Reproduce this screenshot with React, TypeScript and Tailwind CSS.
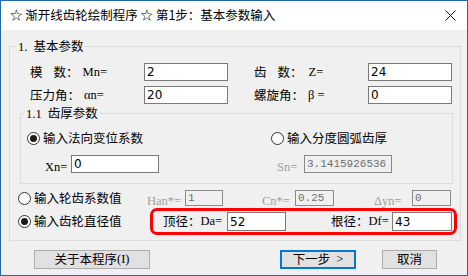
import React from 'react';

const cjk = { fontFamily: '"Noto Sans CJK SC", "Noto Sans", sans-serif' };
const mono = { fontFamily: '"Liberation Mono", "DejaVu Sans Mono", monospace' };
const serif = { fontFamily: '"Liberation Serif", "DejaVu Serif", serif' };

function Radio({ checked, label }: { checked?: boolean; label: string }) {
  return (
    <div className="flex items-center h-[16px]">
      <span className="w-[13px] h-[13px] rounded-full border border-[#333333] bg-white flex items-center justify-center">
        {checked && <span className="w-[7px] h-[7px] rounded-full bg-[#1a1a1a]" />}
      </span>
      <span className="ml-[3px] text-[12.5px] text-black leading-none" style={cjk}>
        {label}
      </span>
    </div>
  );
}

function Field({ value, width, disabled, h = 18 }: { value: string; width: number; disabled?: boolean; h?: number }) {
  return (
    <div
      className={
        disabled
          ? 'border border-[#8a8a8a] bg-[#f0f0f0] text-[#6d6d6d] flex items-center pl-[2px] text-[11px] overflow-hidden whitespace-nowrap'
          : 'border border-[#7a7a7a] bg-white text-black flex items-center pl-[2px] text-[12px]'
      }
      style={{ width, height: h, ...(disabled ? mono : { fontFamily: 'Tahoma, "DejaVu Sans", sans-serif' }) }}
    >
      {value}
    </div>
  );
}

function Code({ t, gray }: { t: string; gray?: boolean }) {
  return (
    <span className={gray ? 'text-[#a0a0a0] text-[12.5px]' : 'text-black text-[12.5px]'} style={serif}>
      {t}
    </span>
  );
}

export default function App() {
  return (
    <div className="w-[468px] h-[276px] border border-[#1f67a8] bg-[#f0f0f0] flex flex-col overflow-hidden select-none" style={cjk}>
      <div className="h-[29px] bg-white flex items-center justify-between pl-[9px] pr-[10px] shrink-0">
        <span className="text-[12.5px] text-black leading-none">☆ 渐开线齿轮绘制程序 ☆ 第1步：基本参数输入</span>
        <svg width="11" height="11" viewBox="0 0 11 11" className="mr-[1px]">
          <path d="M0.5 0.5 L10.5 10.5 M10.5 0.5 L0.5 10.5" stroke="#111" strokeWidth="1" />
        </svg>
      </div>

      <div className="relative ml-[8px] mt-[16px] w-[452px] h-[195px] border border-[#dcdcdc] pt-[16px] shrink-0">
        <span className="absolute left-[6px] top-[-9px] px-[2px] bg-[#f0f0f0] text-[12.5px] leading-[16px] text-black">
          <span style={serif} className="text-[12.5px]">1.</span>
          <span className="ml-[6px]">基本参数</span>
        </span>

        <div className="flex items-center h-[18px] pl-[20px]">
          <div className="w-[114px] flex items-center text-[12.5px]">
            <span>模</span>
            <span className="ml-[11px]">数：</span>
            <span className="ml-[4px]"><Code t="Mn=" /></span>
          </div>
          <Field value="2" width={84} />
          <div className="ml-[26px] w-[114px] flex items-center text-[12.5px]">
            <span>齿</span>
            <span className="ml-[11px]">数：</span>
            <span className="ml-[6px]"><Code t="Z=" /></span>
          </div>
          <Field value="24" width={84} />
        </div>

        <div className="flex items-center h-[18px] pl-[20px] mt-[5px]">
          <div className="w-[114px] flex items-center text-[12.5px]">
            <span>压力角：</span>
            <span className="ml-[4px]"><Code t="αn=" /></span>
          </div>
          <Field value="20" width={84} />
          <div className="ml-[26px] w-[114px] flex items-center text-[12.5px]">
            <span>螺旋角：</span>
            <span className="ml-[4px]"><Code t="β =" /></span>
          </div>
          <Field value="0" width={84} />
        </div>

        <div className="relative ml-[10px] mt-[9px] w-[433px] h-[71px] border border-[#dcdcdc] pt-[16px]">
          <span className="absolute left-[3px] top-[-9px] px-[2px] bg-[#f0f0f0] text-[12.5px] leading-[16px] text-black">
            <span style={serif} className="text-[12.5px]">1.1</span>
            <span className="ml-[6px]">齿厚参数</span>
          </span>
          <div className="flex pl-[6px]">
            <div className="w-[244px]">
              <Radio checked label="输入法向变位系数" />
            </div>
            <Radio label="输入分度圆弧齿厚" />
          </div>
          <div className="flex items-center h-[18px] mt-[9px] pl-[24px]">
            <div className="w-[26px]"><Code t="Xn=" /></div>
            <Field value="0" width={88} />
            <div className="ml-[118px] w-[27px]"><Code t="Sn=" gray /></div>
            <Field value="3.1415926536" width={88} disabled />
          </div>
        </div>

        <div className="flex items-center h-[16px] mt-[6px] pl-[8px]">
          <div className="w-[129px]">
            <Radio label="输入轮齿系数值" />
          </div>
          <div className="w-[38px]"><Code t="Han*=" gray /></div>
          <Field value="1" width={38} disabled h={16} />
          <div className="ml-[39px] w-[33px]"><Code t="Cn*=" gray /></div>
          <Field value="0.25" width={39} disabled h={16} />
          <div className="ml-[40px] w-[38px]"><Code t="Δyn=" gray /></div>
          <Field value="0" width={39} disabled h={16} />
        </div>

        <div className="flex items-center mt-[2px] pl-[8px]">
          <div className="w-[132px]">
            <Radio checked label="输入齿轮直径值" />
          </div>
          <div className="w-[307px] h-[27px] border-[3px] border-[#ff0000] rounded-[7px] flex items-center pl-[10px]">
            <div className="w-[64px] flex items-center text-[12.5px]">
              <span>顶径：</span>
              <Code t="Da=" />
            </div>
            <Field value="52" width={59} h={19} />
            <div className="ml-[45px] w-[61px] flex items-center text-[12.5px]">
              <span>根径：</span>
              <Code t="Df=" />
            </div>
            <Field value="43" width={60} h={19} />
          </div>
        </div>
      </div>

      <div className="flex items-center mt-[9px] h-[19px] text-[12.5px] text-black">
        <div className="ml-[33px] w-[116px] h-[19px] border border-[#adadad] bg-[#e1e1e1] flex items-center justify-center">
          关于本程序<span style={serif} className="text-[12.5px]">(I)</span>
        </div>
        <div className="ml-[130px] w-[76px] h-[19px] border-2 border-[#0078d7] bg-[#e1e1e1] flex items-center justify-center">
          下一步 <span style={serif} className="ml-[6px] text-[12.5px]">&gt;</span>
        </div>
        <div className="ml-[26px] w-[55px] h-[19px] border border-[#adadad] bg-[#e1e1e1] flex items-center justify-center">
          取消
        </div>
      </div>
    </div>
  );
}
